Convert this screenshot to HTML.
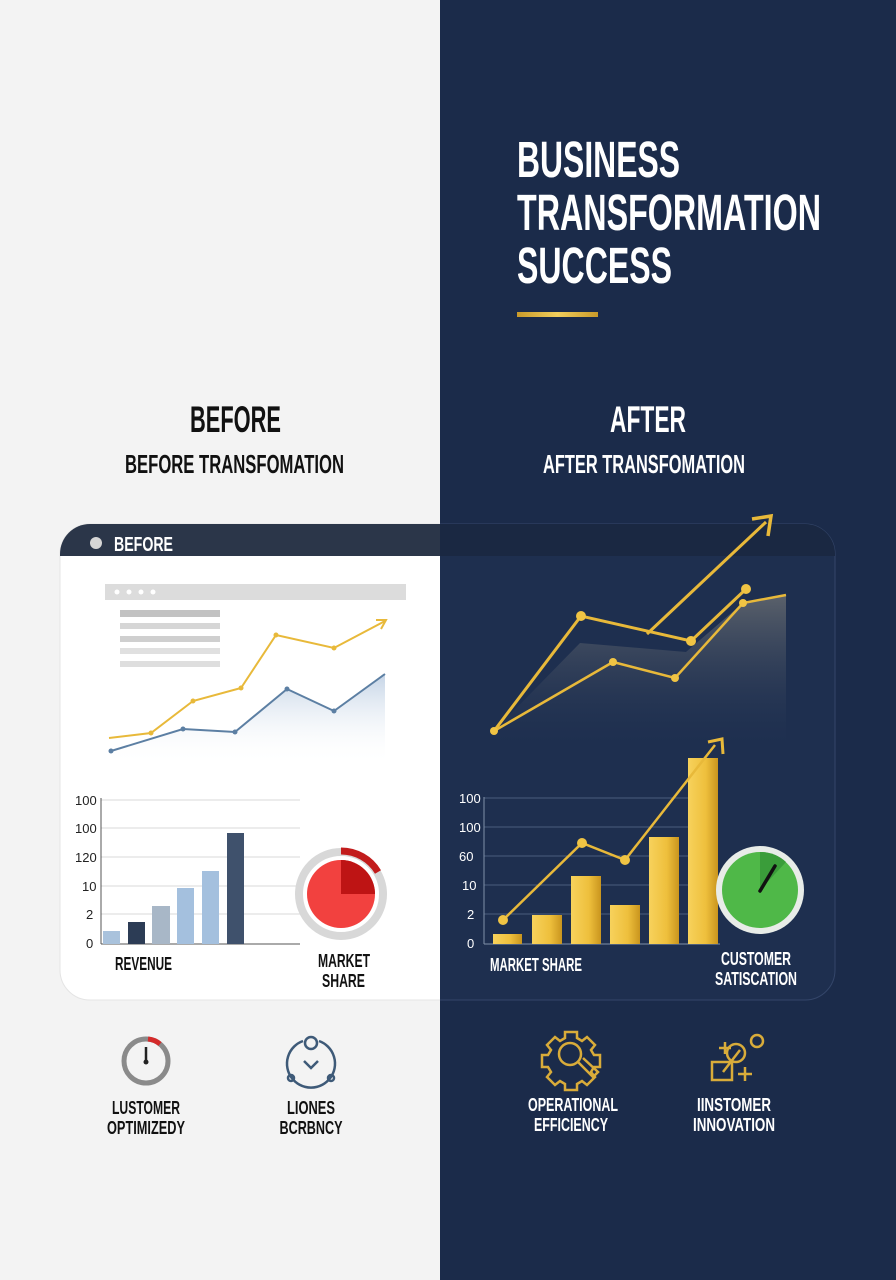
<!DOCTYPE html>
<html><head><meta charset="utf-8"><style>
html,body{margin:0;padding:0;width:896px;height:1280px;overflow:hidden;background:#f3f3f3}
svg{display:block}
text{font-family:"Liberation Sans Narrow","Liberation Sans",sans-serif;font-weight:bold}
</style></head><body>
<svg width="896" height="1280" viewBox="0 0 896 1280" xmlns="http://www.w3.org/2000/svg">
<defs>
<linearGradient id="bl" x1="0" y1="0" x2="0" y2="1"><stop offset="0" stop-color="#c5d4e6"/><stop offset="1" stop-color="#ffffff" stop-opacity="0"/></linearGradient>
<linearGradient id="gy" x1="0" y1="0" x2="0" y2="1"><stop offset="0" stop-color="#6a6e72" stop-opacity=".8"/><stop offset="1" stop-color="#2a3a58" stop-opacity="0"/></linearGradient>
<linearGradient id="gold" x1="0" y1="0" x2="1" y2="0"><stop offset="0" stop-color="#f7d25c"/><stop offset=".6" stop-color="#eebf3c"/><stop offset="1" stop-color="#c9951e"/></linearGradient>
<linearGradient id="gbar" x1="0" y1="0" x2="1" y2="0"><stop offset="0" stop-color="#c99a2a"/><stop offset=".5" stop-color="#f2cf5c"/><stop offset="1" stop-color="#c99a2a"/></linearGradient>
<clipPath id="cardL"><rect x="0" y="0" width="440" height="1280"/></clipPath>
<clipPath id="cardR"><rect x="440" y="0" width="456" height="1280"/></clipPath>
</defs>
<rect x="0" y="0" width="440" height="1280" fill="#f3f3f3"/>
<rect x="440" y="0" width="456" height="1280" fill="#1b2b4a"/>

<text x="517" y="177" font-size="51" fill="#fff" textLength="163" lengthAdjust="spacingAndGlyphs">BUSINESS</text>
<text x="517" y="230" font-size="51" fill="#fff" textLength="304" lengthAdjust="spacingAndGlyphs">TRANSFORMATION</text>
<text x="517" y="283" font-size="51" fill="#fff" textLength="155" lengthAdjust="spacingAndGlyphs">SUCCESS</text>
<rect x="517" y="312" width="81" height="5" fill="url(#gbar)"/>

<text x="190" y="432" font-size="37" fill="#111" textLength="91" lengthAdjust="spacingAndGlyphs">BEFORE</text>
<text x="125" y="473" font-size="26" fill="#111" textLength="219" lengthAdjust="spacingAndGlyphs">BEFORE TRANSFOMATION</text>
<text x="610" y="432" font-size="37" fill="#fff" textLength="76" lengthAdjust="spacingAndGlyphs">AFTER</text>
<text x="543" y="473" font-size="26" fill="#fff" textLength="202" lengthAdjust="spacingAndGlyphs">AFTER TRANSFOMATION</text>

<g clip-path="url(#cardL)">
<rect x="60" y="524" width="775" height="476" rx="30" fill="#fff" stroke="#e4e4e4"/>
<path d="M60 556 V554 A30 30 0 0 1 90 524 H440 V556 Z" fill="#2b3649"/>
</g>
<g clip-path="url(#cardR)">
<rect x="60" y="524" width="775" height="476" rx="30" fill="#1e2f4f" stroke="#34466a"/>
<path d="M440 524 H805 A30 30 0 0 1 835 554 V556 H440 Z" fill="#1a2842"/>
</g>
<circle cx="96" cy="543" r="6" fill="#d6d6d6"/>
<text x="114" y="551" font-size="20" fill="#fff" textLength="59" lengthAdjust="spacingAndGlyphs">BEFORE</text>

<rect x="105" y="584" width="301" height="16" fill="#dcdcdc"/>
<g fill="#fff"><circle cx="117" cy="592" r="2.5"/><circle cx="129" cy="592" r="2.5"/><circle cx="141" cy="592" r="2.5"/><circle cx="153" cy="592" r="2.5"/></g>
<rect x="120" y="610" width="100" height="7" fill="#c2c2c2"/>
<rect x="120" y="623" width="100" height="6" fill="#d6d6d6"/>
<rect x="120" y="636" width="100" height="6" fill="#cfcfcf"/>
<rect x="120" y="648" width="100" height="6" fill="#e0e0e0"/>
<rect x="120" y="661" width="100" height="6" fill="#dedede"/>
<path d="M111 751 L183 729 L235 732 L287 689 L334 711 L385 674 L385 765 L111 765 Z" fill="url(#bl)"/>
<polyline points="111,751 183,729 235,732 287,689 334,711 385,674" fill="none" stroke="#5c7fa3" stroke-width="2"/>
<g fill="#5c7fa3"><circle cx="111" cy="751" r="2.5"/><circle cx="183" cy="729" r="2.5"/><circle cx="235" cy="732" r="2.5"/><circle cx="287" cy="689" r="2.5"/><circle cx="334" cy="711" r="2.5"/></g>
<polyline points="109,738 151,733 193,701 241,688 276,635 334,648 385,621" fill="none" stroke="#e8b93a" stroke-width="2"/>
<path d="M376 620 L386 620 L381 629" fill="none" stroke="#e8b93a" stroke-width="2"/>
<g fill="#e8b93a"><circle cx="151" cy="733" r="2.5"/><circle cx="193" cy="701" r="2.5"/><circle cx="241" cy="688" r="2.5"/><circle cx="276" cy="635" r="2.5"/><circle cx="334" cy="648" r="2.5"/></g>

<g stroke="#d8d8d8" stroke-width="1"><line x1="101" y1="800" x2="300" y2="800"/><line x1="101" y1="828" x2="300" y2="828"/><line x1="101" y1="857" x2="300" y2="857"/><line x1="101" y1="886" x2="300" y2="886"/><line x1="101" y1="914" x2="300" y2="914"/></g>
<line x1="101" y1="798" x2="101" y2="944" stroke="#555"/>
<line x1="101" y1="944" x2="300" y2="944" stroke="#555"/>
<g font-size="13" fill="#222" style="font-weight:normal"><text x="75" y="805" style="font-weight:normal">100</text><text x="75" y="833" style="font-weight:normal">100</text><text x="75" y="862" style="font-weight:normal">120</text><text x="82" y="891" style="font-weight:normal">10</text><text x="86" y="919" style="font-weight:normal">2</text><text x="86" y="948" style="font-weight:normal">0</text></g>
<rect x="103" y="931" width="17" height="13" fill="#a9c2dc"/>
<rect x="128" y="922" width="17" height="22" fill="#2c3c55"/>
<rect x="152" y="906" width="18" height="38" fill="#a8b7c7"/>
<rect x="177" y="888" width="17" height="56" fill="#a4c0de"/>
<rect x="202" y="871" width="17" height="73" fill="#a4c0de"/>
<rect x="227" y="833" width="17" height="111" fill="#3f516c"/>
<circle cx="341" cy="894" r="42" fill="none" stroke="#d8d8d8" stroke-width="8"/>
<circle cx="341" cy="894" r="34" fill="#f2413f"/>
<path d="M341 894 V860 A34 34 0 0 1 375 894 Z" fill="#be1414"/>
<path d="M341 851 A43 43 0 0 1 378 872" fill="none" stroke="#c21c1c" stroke-width="7"/>
<text x="115" y="970" font-size="18" fill="#111" textLength="57" lengthAdjust="spacingAndGlyphs">REVENUE</text>
<text x="318" y="967" font-size="18" fill="#111" textLength="52" lengthAdjust="spacingAndGlyphs">MARKET</text>
<text x="322" y="987" font-size="18" fill="#111" textLength="43" lengthAdjust="spacingAndGlyphs">SHARE</text>

<path d="M494 731 L580 643 L686 652 L743 603 L786 595 L786 745 L494 745 Z" fill="url(#gy)"/>
<polyline points="494,731 613,662 675,678 743,603 786,595" fill="none" stroke="#e8b93a" stroke-width="2.5"/>
<polyline points="494,731 581,616 691,641 746,589" fill="none" stroke="#e8b93a" stroke-width="3"/>
<line x1="647" y1="634" x2="766" y2="522" stroke="#e8b93a" stroke-width="3"/>
<path d="M752 519 L771 516 L768 536" fill="none" stroke="#e8b93a" stroke-width="3.5"/>
<g fill="#f0c444"><circle cx="494" cy="731" r="4"/><circle cx="581" cy="616" r="5"/><circle cx="691" cy="641" r="5"/><circle cx="746" cy="589" r="5"/><circle cx="613" cy="662" r="4"/><circle cx="675" cy="678" r="4"/><circle cx="743" cy="603" r="4"/></g>

<g stroke="#4b5d7e" stroke-width="1"><line x1="484" y1="798" x2="690" y2="798"/><line x1="484" y1="827" x2="690" y2="827"/><line x1="484" y1="856" x2="690" y2="856"/><line x1="484" y1="885" x2="690" y2="885"/><line x1="484" y1="914" x2="690" y2="914"/></g>
<line x1="484" y1="797" x2="484" y2="944" stroke="#8090a8"/>
<line x1="484" y1="944" x2="720" y2="944" stroke="#8090a8"/>
<g font-size="13" fill="#fff"><text x="459" y="803" style="font-weight:normal">100</text><text x="459" y="832" style="font-weight:normal">100</text><text x="459" y="861" style="font-weight:normal">60</text><text x="462" y="890" style="font-weight:normal">10</text><text x="467" y="919" style="font-weight:normal">2</text><text x="467" y="948" style="font-weight:normal">0</text></g>
<rect x="493" y="934" width="29" height="10" fill="url(#gold)"/>
<rect x="532" y="915" width="30" height="29" fill="url(#gold)"/>
<rect x="571" y="876" width="30" height="68" fill="url(#gold)"/>
<rect x="610" y="905" width="30" height="39" fill="url(#gold)"/>
<rect x="649" y="837" width="30" height="107" fill="url(#gold)"/>
<rect x="688" y="758" width="30" height="186" fill="url(#gold)"/>
<polyline points="503,920 582,843 625,860 715,745" fill="none" stroke="#e8b93a" stroke-width="2.5"/>
<path d="M708 742 L722 739 L723 754" fill="none" stroke="#e8b93a" stroke-width="3"/>
<g fill="#f0c444"><circle cx="503" cy="920" r="5"/><circle cx="582" cy="843" r="5"/><circle cx="625" cy="860" r="5"/></g>
<circle cx="760" cy="890" r="44" fill="#e8ece8"/>
<circle cx="760" cy="890" r="38" fill="#4fb848"/>
<path d="M760 890 V852 A38 38 0 0 1 786 862 Z" fill="#3a9d3a"/>
<line x1="760" y1="891" x2="775" y2="866" stroke="#111" stroke-width="3.5" stroke-linecap="round"/>
<text x="490" y="971" font-size="18" fill="#fff" textLength="92" lengthAdjust="spacingAndGlyphs">MARKET SHARE</text>
<text x="721" y="965" font-size="18" fill="#fff" textLength="70" lengthAdjust="spacingAndGlyphs">CUSTOMER</text>
<text x="715" y="985" font-size="18" fill="#fff" textLength="82" lengthAdjust="spacingAndGlyphs">SATISCATION</text>

<circle cx="146" cy="1061" r="22" fill="none" stroke="#8a8a8a" stroke-width="5"/>
<path d="M148 1039 A22 22 0 0 1 160 1044" fill="none" stroke="#d42a2a" stroke-width="5"/>
<line x1="146" y1="1047" x2="146" y2="1062" stroke="#222" stroke-width="2.5"/>
<circle cx="146" cy="1062" r="2.5" fill="#222"/>
<g fill="none" stroke="#3e5a78" stroke-width="2.5">
<path d="M303 1041 A24 24 0 1 0 319 1041"/>
<circle cx="311" cy="1043" r="6"/>
<path d="M304 1061 L311 1068 L318 1061"/>
<circle cx="291" cy="1078" r="3"/><circle cx="331" cy="1078" r="3"/>
</g>
<g fill="none" stroke="#d9ac3a" stroke-width="2.5">
<path d="M565 1032 h12 v6 l5 3 l5-4 l8 8 l-4 5 l3 5 h6 v12 h-6 l-3 5 l4 5 l-8 8 l-5-4 l-5 3 v6 h-12 v-6 l-5-3 l-5 4 l-8-8 l4-5 l-3-5 h-6 v-12 h6 l3-5 l-4-5 l8-8 l5 4 l5-3 z"/>
<circle cx="570" cy="1054" r="11"/>
<path d="M578 1062 L593 1077 L598 1072 L583 1058"/>
</g>
<g fill="none" stroke="#d9ac3a" stroke-width="2.5">
<rect x="712" y="1062" width="20" height="18"/>
<circle cx="736" cy="1053" r="9"/>
<circle cx="757" cy="1041" r="6"/>
<path d="M719 1048 h12 M725 1042 v12 M738 1074 h14 M745 1067 v14 M723 1072 L740 1050"/>
</g>
<g font-size="18" fill="#111" text-anchor="middle">
<text x="146" y="1114" textLength="68" lengthAdjust="spacingAndGlyphs">LUSTOMER</text>
<text x="146" y="1134" textLength="78" lengthAdjust="spacingAndGlyphs">OPTIMIZEDY</text>
<text x="311" y="1114" textLength="48" lengthAdjust="spacingAndGlyphs">LIONES</text>
<text x="311" y="1134" textLength="63" lengthAdjust="spacingAndGlyphs">BCRBNCY</text>
</g>
<g font-size="18" fill="#fff" text-anchor="middle">
<text x="573" y="1111" textLength="90" lengthAdjust="spacingAndGlyphs">OPERATIONAL</text>
<text x="571" y="1131" textLength="74" lengthAdjust="spacingAndGlyphs">EFFICIENCY</text>
<text x="734" y="1111" textLength="74" lengthAdjust="spacingAndGlyphs">IINSTOMER</text>
<text x="734" y="1131" textLength="82" lengthAdjust="spacingAndGlyphs">INNOVATION</text>
</g>
</svg>
</body></html>
